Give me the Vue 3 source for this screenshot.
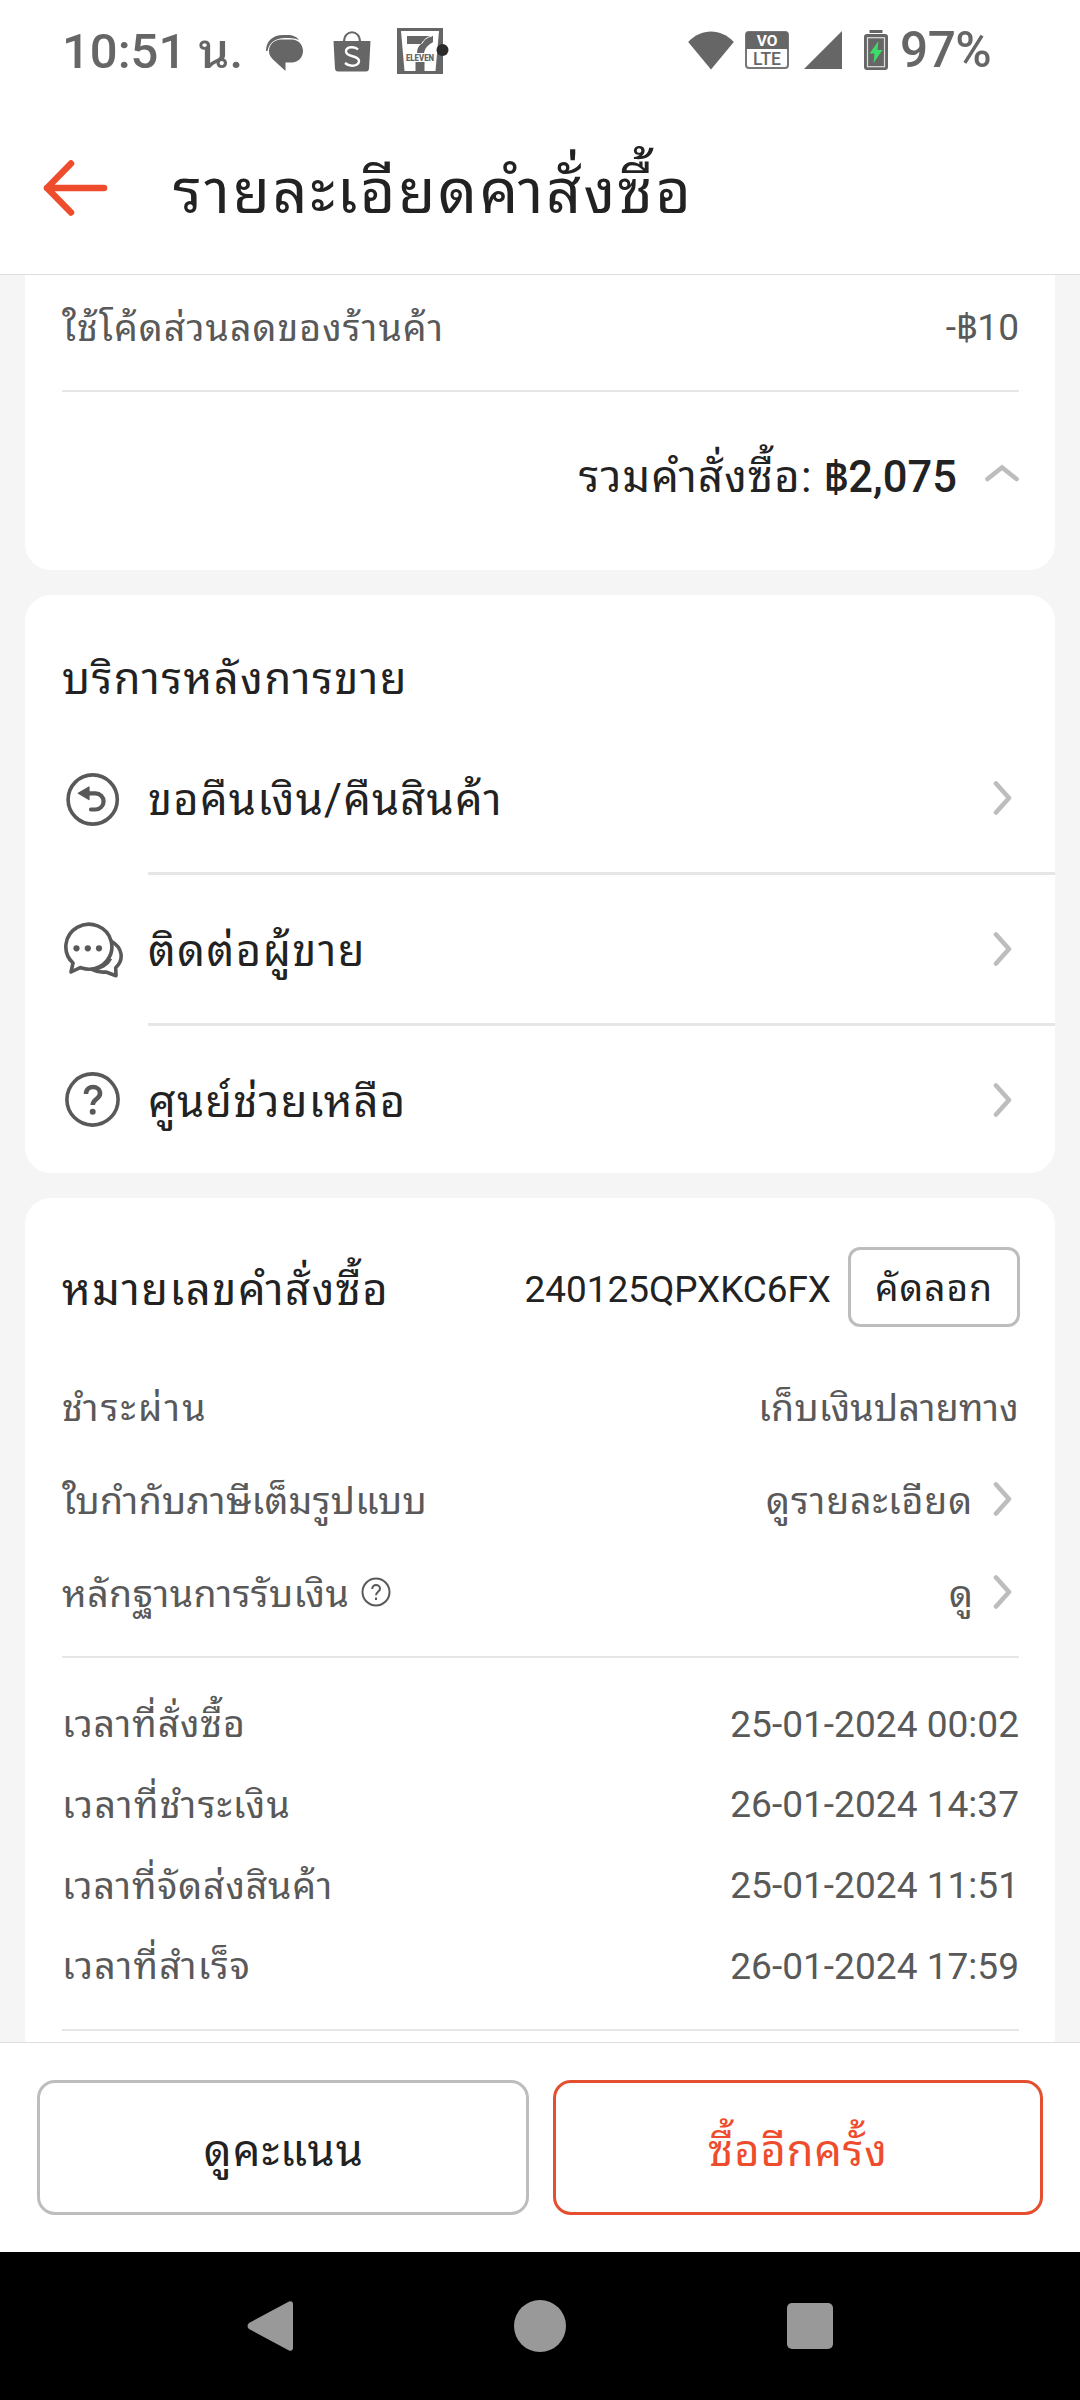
<script setup>
const services = [
  { icon: 'refund', label: 'ขอคืนเงิน/คืนสินค้า', tracking: 0.028 },
  { icon: 'chat', label: 'ติดต่อผู้ขาย', tracking: 0.034 },
  { icon: 'help', label: 'ศูนย์ช่วยเหลือ', tracking: 0.028 },
]
const details = [
  { label: 'ชำระผ่าน', tracking: 0.057, value: 'เก็บเงินปลายทาง', valueTracking: 0.006 },
  { label: 'ใบกำกับภาษีเต็มรูปแบบ', tracking: 0.007, value: 'ดูรายละเอียด', valueTracking: 0.023, link: true },
  { label: 'หลักฐานการรับเงิน', tracking: 0.011, value: 'ดู', valueTracking: 0, link: true, hint: true },
]
const times = [
  { label: 'เวลาที่สั่งซื้อ', value: '25-01-2024 00:02', tracking: 0.024 },
  { label: 'เวลาที่ชำระเงิน', value: '26-01-2024 14:37', tracking: 0.035 },
  { label: 'เวลาที่จัดส่งสินค้า', value: '25-01-2024 11:51', tracking: 0.022 },
  { label: 'เวลาที่สำเร็จ', value: '26-01-2024 17:59', tracking: 0.032 },
]
const track = (em) => ({ letterSpacing: `${em}em` })
</script>

<template>
  <div class="screen">
    <div class="status">
      <span class="clock">10:51 น.</span>
      <svg class="s-chat" width="38" height="38" viewBox="0 0 38 38">
        <path d="M0 17C0 7 7 1 17 1h4c6 0 10 2 12 5C28 4 24 4 19 4 9 4 3 9 1.500 17z" fill="#666" />
        <path d="M15 5.500h11c6 0 11 5 11 11.500s-5 11.500-11 11.500h-6.500V37L7 25.500C4.500 23 3 20.500 3 17c0-6.500 5.500-11.500 12-11.500z" fill="#666" />
      </svg>
      <svg class="s-bag" width="38" height="41" viewBox="0 0 38 41">
        <path d="M11 11c0-13 16-13 16 0" fill="none" stroke="#666" stroke-width="2" />
        <path d="M.5 10h37l-1.500 28a3 3 0 0 1-3 2.500H5A3 3 0 0 1 2 38z" fill="#666" />
        <path d="M25 18.500c-3-3.500-12-3-12 2 0 6 13 3.500 13 9.500 0 5-9 6.500-14 2" fill="none" stroke="#fff" stroke-width="2.400" />
      </svg>
      <svg class="s-seven" width="52" height="46" viewBox="0 0 52 46">
        <rect width="46" height="46" fill="#666" />
        <path d="M4 3h38l-3.500 40H7.500z" fill="#fff" />
        <path d="M10 8h26v6c-5 3-8 6-9 11h-7c0-4 1.500-7 4-9H10zM18.500 34h9v10h-9z" fill="#666" />
        <path d="M35 8c-5 1-8 3.500-10.500 8" fill="none" stroke="#fff" stroke-width="1" />
        <text x="23" y="32.500" text-anchor="middle" textLength="28" lengthAdjust="spacingAndGlyphs" class="eleven">ELEVEN</text>
        <circle cx="45.500" cy="22" r="6" fill="#2b2b2b" />
      </svg>
      <span class="grow"></span>
      <svg class="s-wifi" width="46" height="39" viewBox="0 0 46 39">
        <path d="M23 38.500.2 11C13-3 33-3 45.800 11z" fill="#666" />
      </svg>
      <svg class="s-lte" width="44" height="38" viewBox="0 0 44 38">
        <rect x="1" y="1" width="42" height="36" rx="3" fill="#fff" stroke="#777" stroke-width="2" />
        <path d="M1 18V4a3 3 0 0 1 3-3h36a3 3 0 0 1 3 3v14z" fill="#666" />
        <text x="22" y="15.300" text-anchor="middle" class="vo">VO</text>
        <text x="22" y="33.500" text-anchor="middle" class="lte">LTE</text>
      </svg>
      <svg class="s-signal" width="38" height="38" viewBox="0 0 38 38"><path d="M38 0v38H0z" fill="#666" /></svg>
      <svg class="s-batt" width="24" height="40" viewBox="0 0 24 40">
        <path d="M5.500 0h13v3h-13z" fill="#666" />
        <rect y="4" width="24" height="36" rx="3" fill="#666" />
        <rect x="3.500" y="7.700" width="17" height="29" fill="none" stroke="#ddd" stroke-width="1.200" />
        <path d="M14.500 11 5.500 23.500h5L9.500 33l9-13h-5z" fill="#3ddc68" />
      </svg>
      <span class="pct">97%</span>
    </div>

    <header class="bar">
      <svg class="back" width="66" height="58" viewBox="0 0 66 58">
        <path d="M29 4.500 5 29l24 24.500M5 29h57" fill="none" stroke="#ee4d2d" stroke-width="6.500" stroke-linecap="round" stroke-linejoin="round" />
      </svg>
      <h1>รายละเอียดคำสั่งซื้อ</h1>
    </header>

    <main class="content">
      <section class="card top-card">
        <div class="row discount"><span class="th">ใช้โค้ดส่วนลดของร้านค้า</span><span>-฿10</span></div>
        <div class="rule"></div>
        <div class="total">
          <span class="sum"><span class="th">รวมคำสั่งซื้อ:</span> <b>฿2,075</b></span>
          <svg width="34" height="18" viewBox="0 0 34 18">
            <path d="M2.500 15 17 3.500 31.500 15" fill="none" stroke="#bdbdbd" stroke-width="4.600" stroke-linecap="round" />
          </svg>
        </div>
      </section>

      <section class="card services">
        <h2>บริการหลังการขาย</h2>
        <div v-for="s in services" :key="s.icon" class="service">
          <svg class="s-icon" width="62" height="62" viewBox="0 0 62 62" fill="none" stroke="#595959" stroke-width="3.600">
            <template v-if="s.icon === 'refund'">
              <circle cx="30.700" cy="30.500" r="24.600" />
              <path d="M25 24.300h8.500a8.100 8.100 0 0 1 0 16.200H29" stroke-width="4.200" stroke-linecap="round" />
              <path d="M16.300 24.300 27 18v12.600z" fill="#595959" stroke="#595959" stroke-width="1.200" stroke-linejoin="round" />
            </template>
            <template v-else-if="s.icon === 'chat'">
              <path d="M11 43A23 22.500 0 1 1 26.500 49.200c-3 0-5-.7-8.300-1.600L9 52z" stroke-linejoin="round" />
              <path d="M49 21c11.500 6.500 13.500 18.500 4.700 26.700l.3 8L44 52c-5 .5-9.500 0-14-2.500 8.500-.5 15.500-5 18.500-11" stroke-linejoin="round" />
              <g fill="#595959" stroke="none"><circle cx="14.500" cy="28.300" r="3.100" /><circle cx="25.800" cy="28.300" r="3.100" /><circle cx="37" cy="28.300" r="3.100" /></g>
            </template>
            <template v-else>
              <circle cx="30.500" cy="30.500" r="25.600" />
              <path d="M24 25c0-9.500 14-9 14-.5 0 5.500-7.300 5.500-7.300 11.500" stroke-width="4.600" />
              <circle cx="30.700" cy="42.700" r="3" fill="#595959" stroke="none" />
            </template>
          </svg>
          <div class="s-main">
            <span :style="track(s.tracking)">{{ s.label }}</span>
            <svg class="chev" width="20" height="34" viewBox="0 0 20 34"><path d="M3 2.500 16 17 3 31.500" /></svg>
          </div>
        </div>
      </section>

      <section class="card order">
        <div class="order-head">
          <h2>หมายเลขคำสั่งซื้อ</h2>
          <span class="number">240125QPXKC6FX</span>
          <button class="copy th">คัดลอก</button>
        </div>
        <div class="details">
          <div v-for="d in details" :key="d.label" class="row detail">
            <span class="th" :style="track(d.tracking)">{{ d.label }}</span>
            <svg v-if="d.hint" class="hint" width="30" height="30" viewBox="0 0 30 30" fill="none" stroke="#595959" stroke-width="2">
              <circle cx="15" cy="15" r="13.500" />
              <path d="M11.200 12c0-5.500 7.800-5 7.800-.3 0 3-4 3.300-4 6.600" />
              <path d="M15 20.500v2.500" />
            </svg>
            <span class="grow"></span>
            <span class="th" :style="track(d.valueTracking)">{{ d.value }}</span>
            <svg v-if="d.link" class="chev" width="20" height="34" viewBox="0 0 20 34"><path d="M3 2.500 16 17 3 31.500" /></svg>
          </div>
        </div>
        <div class="rule"></div>
        <div class="times">
          <div v-for="t in times" :key="t.label" class="row time"><span class="th" :style="track(t.tracking)">{{ t.label }}</span><span>{{ t.value }}</span></div>
        </div>
        <div class="rule"></div>
      </section>
    </main>

    <footer class="actions">
      <button class="btn th">ดูคะแนน</button>
      <button class="btn primary">ซื้ออีกครั้ง</button>
    </footer>

    <nav class="nav">
      <svg width="46" height="52" viewBox="0 0 46 52"><path d="M42 1.500 2 23q-3 3 0 6l40 21.500q4 1 4-3v-43q0-4-4-3z" fill="#999" /></svg>
      <svg width="52" height="52" viewBox="0 0 52 52"><circle cx="26" cy="26" r="26" fill="#999" /></svg>
      <svg width="46" height="46" viewBox="0 0 46 46"><rect width="46" height="46" rx="5" fill="#999" /></svg>
    </nav>
  </div>
</template>

<style>
body { margin: 0; background: #fff; }
</style>

<style scoped>
.screen { width: 1080px; height: 2400px; display: flex; flex-direction: column; overflow: hidden; background: #fff; color: #222; font-family: Roboto, "Noto Sans Thai Looped", "Noto Sans", sans-serif; line-height: 1.2; }
.screen * { box-sizing: border-box; }
svg { display: block; flex: none; }
span, h1, h2, button { white-space: nowrap; }
h1, h2 { margin: 0; font-weight: 400; }
button { font-family: inherit; line-height: 1.2; padding: 0; background: #fff; }
.grow { flex: 1; }
.th { letter-spacing: .028em; }

.status { height: 104px; padding: 0 88px 0 62px; display: flex; align-items: flex-start; color: #666; }
.clock { width: 204px; font-size: 49px; line-height: 60px; margin-top: 22px; font-weight: 500; }
.s-chat { margin-top: 34px; }
.s-bag { margin: 31px 0 0 29px; }
.s-seven { margin: 28px 0 0 26px; }
.s-wifi { margin-top: 31px; }
.s-lte { margin: 31px 0 0 11px; }
.s-signal { margin: 31px 0 0 15px; }
.s-batt { margin: 30px 0 0 22px; }
.pct { margin: 20px 0 0 12px; font-size: 49.500px; line-height: 60px; width: 92px; font-weight: 500; letter-spacing: -.01em; }
.eleven { font: 900 9px Roboto, sans-serif; fill: #666; }
.vo { font: bold 15.500px Roboto, sans-serif; fill: #fff; }
.lte { font: 500 17.500px Roboto, sans-serif; fill: #666; }

.bar { height: 171px; border-bottom: 1px solid #dedede; display: flex; align-items: flex-start; }
.back { margin: 55px 0 0 42px; }
h1 { margin: 50.500px 0 0 65px; font-size: 61px; line-height: 74px; letter-spacing: .042em; }

.content { height: 1767px; background: #f5f5f5; padding: 0 25px; overflow: hidden; }
.card { background: #fff; border-radius: 26px; }
.row { display: flex; justify-content: space-between; align-items: center; font-size: 37.100px; color: #595959; padding-top: 1px; }
.row .th { font-size: 37.500px; }
.rule { height: 2px; background: #e6e6e6; }

.top-card { height: 295px; padding: 0 36px 0 37px; border-radius: 0 0 26px 26px; }
.discount { height: 106px; margin-bottom: 9px; }
.total { height: 170px; display: flex; justify-content: flex-end; align-items: center; gap: 28px; font-size: 43.500px; }
.sum { padding-top: 2px; }
.total svg { margin-top: -8px; }
.total b { font-weight: 500; }

.services { margin-top: 25px; height: 578px; padding: 41px 0 0 37px; }
h2 { font-size: 43.500px; line-height: 88px; letter-spacing: .036em; }
.service { display: flex; align-items: center; }
.s-icon { margin-right: 24px; }
.s-main { flex: 1; height: 151px; display: flex; align-items: center; justify-content: space-between; border-bottom: 3px solid #e6e6e6; padding-right: 42px; font-size: 43.500px; }
.s-main span { padding-top: 7px; }
.service:last-child .s-main { border-bottom: 0; height: 147px; }
.chev path { fill: none; stroke: #bdbdbd; stroke-width: 4.600; stroke-linecap: round; stroke-linejoin: round; }

.order { margin-top: 25px; height: 1000px; padding: 49px 36px 0 37px; }
.order-head { height: 80px; display: flex; align-items: center; margin-right: -1px; }
.order-head h2 { flex: 1; padding-top: 7px; }
.number { font-size: 36.900px; padding-top: 7px; }
.copy { width: 172px; height: 80px; margin-left: 17px; border: 3px solid #bdbdbd; border-radius: 12px; font-size: 37px; color: #222; padding-top: 5px; }
.details { margin: 34px 0 16px; }
.detail { height: 93px; }
.detail .chev { margin: -4px 6px 0 20px; }
.hint { margin: -5px 0 0 12px; }
.times { padding: 26px 0 22px; }
.time { height: 80.700px; }

.actions { height: 210px; border-top: 1px solid #dedede; padding: 37px 37px 0; display: flex; gap: 24px; }
.btn { flex: 1; height: 135px; border: 3px solid #bdbdbd; border-radius: 18px; font-size: 43.500px; padding: 10px 0 0 2px; color: #222; }
.primary { border-color: #e44f30; color: #ee4d2d; letter-spacing: .02em; padding-left: 0; }

.nav { flex: 1; background: #000; display: grid; grid-template-columns: repeat(3, 270px); justify-content: center; justify-items: center; align-items: center; }
</style>
